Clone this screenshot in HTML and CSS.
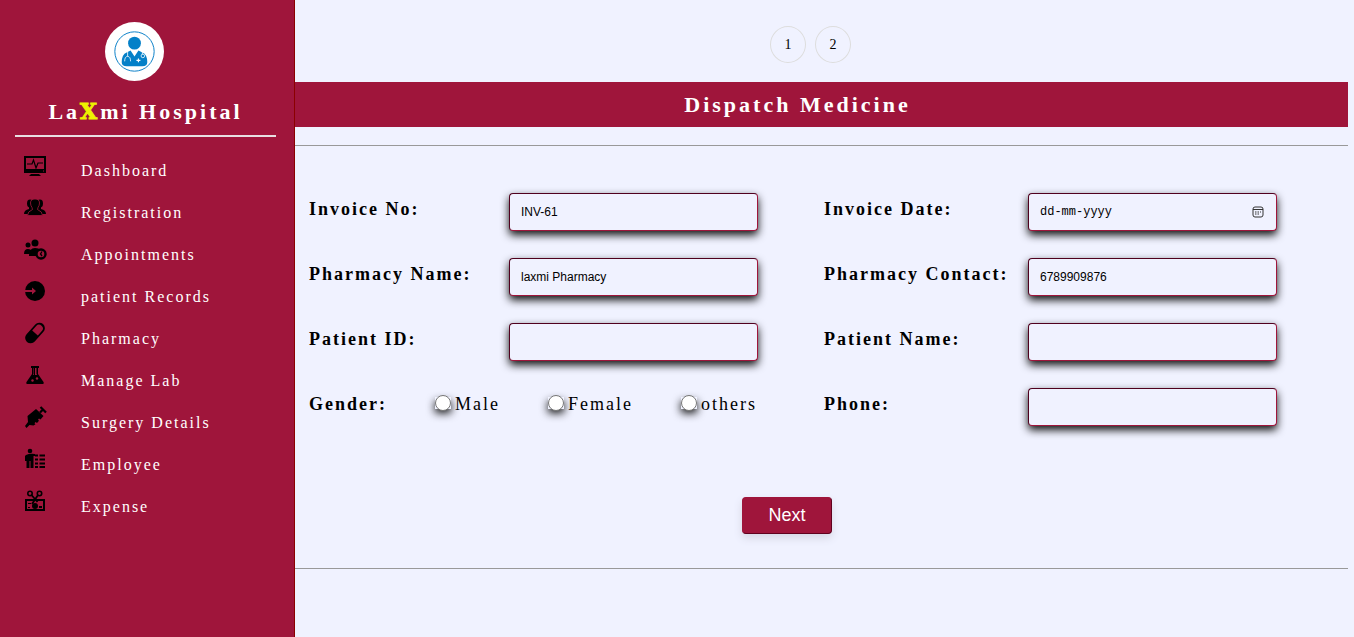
FILE: index.html
```
<!DOCTYPE html>
<html lang="en">
<head>
<meta charset="utf-8">
<title>Dispatch Medicine</title>
<link rel="stylesheet" href="styles.css">
</head>
<body>
<aside class="sidebar">
  <svg class="logo" viewBox="0 0 60 60" aria-hidden="true">
    <circle cx="30" cy="30" r="30" fill="#fff"/>
    <circle cx="30" cy="30" r="20" fill="none" stroke="#0a80c8"/>
    <circle cx="30" cy="21.500" r="6.500" fill="#0480c8"/>
    <path d="M17 41q0-8 5-10l4-2 4 6 4-6 4 2q5 2 5 10 0 4-5 4H22q-5 0-5-4z" fill="#0480c8"/>
    <path d="M23 30v5m-3 5q0-5 3-5t3 5M38 29v4" fill="none" stroke="#fff" stroke-width=".8"/>
    <circle cx="38.500" cy="34.500" r="1.800" fill="none" stroke="#fff" stroke-width=".8"/>
    <path d="M34 37v4m-2-2h4" stroke="#fff" stroke-width="1.200"/>
  </svg>
  <h1 class="brand">La<span class="brand-x">X</span>mi Hospital</h1>
  <nav>
    <ul class="menu">
      <li><a class="menu-link" href="#"><svg class="menu-icon" viewBox="0 0 24 24"><path fill-rule="evenodd" d="M1 3h22v17H1zM3 5v11h18V5z"/><path d="M4 11h5l1.500-4 2.500 8 2-5h5" fill="none" stroke="#000" stroke-width="1.200"/><path d="M8 21h8l2 2H6z"/><path d="M20 17.500h1v1h-1z" fill="#9f153b"/></svg>Dashboard</a></li>
      <li><a class="menu-link" href="#"><svg class="menu-icon" viewBox="0 0 24 24"><ellipse cx="7" cy="8.500" rx="3" ry="4"/><ellipse cx="17" cy="8.500" rx="3" ry="4"/><path d="M1 19q0-4 5-5v-4h12v4q5 1 5 5z"/><path d="M4.500 20.500q0-4 5-6l-.5-2q-1.500-2-1.500-4.500 0-4 4.500-4t4.500 4q0 2.500-1.500 4.500l-.5 2q5 2 5 6z" stroke="#9f153b" stroke-width=".8"/></svg>Registration</a></li>
      <li><a class="menu-link" href="#"><svg class="menu-icon" viewBox="0 0 24 24"><circle cx="5" cy="8" r="2.500"/><circle cx="12" cy="6" r="3.500"/><path d="M1 17q0-5 4-5 3 0 3 2-2 1-2 3zM6 19q0-8 6-8 4 0 5 2-4 2-4 6z"/><circle cx="18" cy="17" r="4.500" fill="none" stroke="#000" stroke-width="2.400"/><path d="M19 14.500L17.500 17l1.500 2" fill="none" stroke="#000" stroke-width="1.300"/></svg>Appointments</a></li>
      <li><a class="menu-link" href="#"><svg class="menu-icon" viewBox="0 0 24 24"><circle cx="12" cy="12" r="10"/><path d="M1 11h8V8.500l4 3.500-4 3.500V13H1z" fill="#9f153b"/></svg>patient Records</a></li>
      <li><a class="menu-link" href="#"><svg class="menu-icon" viewBox="0 0 24 24"><g transform="rotate(-48 12 12)"><rect y="6.500" width="24" height="11" rx="5.500"/><path d="M12 8.200h6a3.800 3.800 0 0 1 0 7.600h-6z" fill="#9f153b"/></g></svg>Pharmacy</a></li>
      <li><a class="menu-link" href="#"><svg class="menu-icon" viewBox="0 0 24 24"><path d="M8 3h8v2h-1v6l5.500 8q1 2-1.500 2H5q-2.500 0-1.500-2L9 11V5H8z"/><path d="M10.500 5h3v6l2 3H9l1.500-3z" fill="#9f153b"/><path d="M9 12h6l1 2H8zM11 5h1v8h-1z"/><circle cx="9.500" cy="17.500" r="1.200" fill="#9f153b"/><circle cx="14" cy="15.500" r="1.200" fill="#9f153b"/></svg>Manage Lab</a></li>
      <li><a class="menu-link" href="#"><svg class="menu-icon" viewBox="0 0 24 24"><path d="M2 21l3-4-.5-6L13 4l7.500 7-3 3.500-1.500-1-1 1.200 1 1-2 2.300-1.500-1-1 1.200 1 1-2 1.300-4-.5-3 3z"/><path d="M17 7.500l3.500-3.500m-3-2l5.500 5.500" fill="none" stroke="#000" stroke-width="2.200"/></svg>Surgery Details</a></li>
      <li><a class="menu-link" href="#"><svg class="menu-icon" viewBox="0 0 24 24"><circle cx="7" cy="4" r="2.300"/><path d="M3 8q4-2 9-1v2h-1.500v12h-3v-7h-1v7h-3v-7H2V9z"/><path d="M12 8.500h3m1.500 0H22M12 12.500h3m1.500 0H22M12 16.500h3m1.500 0H22M12 20h3m1.500 0H22" stroke="#000" stroke-width="2"/></svg>Employee</a></li>
      <li><a class="menu-link" href="#"><svg class="menu-icon" viewBox="0 0 24 24"><path fill-rule="evenodd" d="M2 10h20v12H2zM4 12v8h16v-8z"/><circle cx="12" cy="17" r="3"/><path d="M5 14h3v1H5zM16 17h3v2h-3zM5 18h2v1H5z"/><circle cx="7" cy="4.500" r="2.200" fill="none" stroke="#000" stroke-width="1.600"/><circle cx="16.500" cy="4.500" r="2.200" fill="none" stroke="#000" stroke-width="1.600"/><path d="M8.500 6l6 7M15 6l-6 9" stroke="#000" stroke-width="1.800"/></svg>Expense</a></li>
    </ul>
  </nav>
</aside>
<main class="main">
  <nav class="steps">
    <a class="step" href="#">1</a>
    <a class="step" href="#">2</a>
  </nav>
  <h2 class="banner">Dispatch Medicine</h2>
  <form class="form">
    <div class="fields">
      <label class="label" for="invoice">Invoice No:</label>
      <input class="input" id="invoice" type="text" value="INV-61">
      <label class="label" for="date">Invoice Date:</label>
      <div class="date">
        <input class="input input-date" id="date" type="text" placeholder="dd-mm-yyyy">
        <svg class="calendar" viewBox="0 0 12 12" aria-hidden="true"><rect x="1" y="1" width="10" height="10" rx="2" fill="none" stroke="#333"/><path d="M1 3.500h10" stroke="#333"/><path d="M3 6h1.500m1 0H7m1 0h1M3 8h1.500m1 0H7" stroke="#333"/></svg>
      </div>
      <label class="label" for="pharmacy">Pharmacy Name:</label>
      <input class="input" id="pharmacy" type="text" value="laxmi Pharmacy">
      <label class="label" for="contact">Pharmacy Contact:</label>
      <input class="input" id="contact" type="text" value="6789909876">
      <label class="label" for="pid">Patient ID:</label>
      <input class="input" id="pid" type="text">
      <label class="label" for="pname">Patient Name:</label>
      <input class="input" id="pname" type="text">
      <div class="gender" role="radiogroup" aria-labelledby="gender">
        <span class="label gender-label" id="gender">Gender:</span>
        <label class="option"><input class="radio" type="radio" name="gender">Male</label>
        <label class="option"><input class="radio" type="radio" name="gender">Female</label>
        <label class="option"><input class="radio" type="radio" name="gender">others</label>
      </div>
      <label class="label" for="phone">Phone:</label>
      <input class="input" id="phone" type="tel">
    </div>
    <button class="next" type="button">Next</button>
  </form>
</main>
</body>
</html>
```
FILE: styles.css
```
* { box-sizing: border-box; }
body {
  margin: 0;
  min-height: 100vh;
  display: flex;
  background: #f0f2ff;
  color: #000;
  font-family: "Liberation Serif", "Times New Roman", serif;
}
.sidebar {
  flex: 0 0 295px;
  padding: 22px 18px 0 15px;
  background: #9f153b;
  border-right: 1px solid #8b0000;
}
.logo { display: block; width: 59px; margin-left: 90px; }
.brand {
  margin: 0;
  padding: 16px 0 9px;
  border-bottom: 2px solid #e8dfe2;
  color: #fff;
  font-size: 22px;
  line-height: 29px;
  letter-spacing: 3px;
  text-align: center;
}
.brand-x {
  color: #eef200;
  font-family: "DejaVu Serif", serif;
  -webkit-text-stroke: 1px #eef200;
}
.menu { list-style: none; margin: 0; padding: 13px 0 0 8px; }
.menu-link {
  display: flex;
  align-items: center;
  gap: 34px;
  height: 42px;
  color: #fff;
  font-size: 16px;
  letter-spacing: 2px;
  text-decoration: none;
}
.menu-icon { width: 24px; height: 36px; padding-bottom: 12px; }
.main { flex: 1; padding-right: 6px; }
.steps {
  display: flex;
  justify-content: center;
  gap: 9px;
  padding: 26px 22px 19px 0;
}
.step {
  width: 36px;
  height: 37px;
  border: 1px solid #ddd;
  border-radius: 50%;
  color: #000;
  font-size: 14px;
  line-height: 35px;
  text-align: center;
  text-decoration: none;
}
.banner {
  margin: 0 0 18px;
  padding-right: 48px;
  background: #9f153b;
  color: #fff;
  font-size: 22px;
  line-height: 45px;
  letter-spacing: 3px;
  text-align: center;
}
.form {
  padding: 33px 0 34px;
  border-top: 1px solid #999;
  border-bottom: 1px solid #999;
}
.fields {
  display: grid;
  grid-template-columns: 200fr 315fr 204fr 320fr;
  grid-auto-rows: 65px;
  align-items: center;
  padding-left: 14px;
}
.label {
  padding-bottom: 4px;
  font-size: 18px;
  font-weight: bold;
  letter-spacing: 2px;
  white-space: nowrap;
}
.input {
  width: 249px;
  height: 38px;
  padding: 0 11px;
  border: 1px solid;
  border-color: #50001e #9f153b #9f153b #50001e;
  border-radius: 4px;
  background: #f0f2ff;
  box-shadow: 0 4px 8px #111;
  color: #000;
  font: 12px "Liberation Sans", Arial, sans-serif;
}
.date { position: relative; width: 249px; }
.input-date { display: block; font-family: "Liberation Mono", monospace; }
.input-date::placeholder { color: #000; opacity: 1; }
.calendar { position: absolute; right: 13px; top: 13px; width: 12px; height: 12px; }
.gender { grid-column: span 2; display: flex; align-items: center; }
.gender-label { width: 126px; }
.option {
  display: flex;
  align-items: center;
  margin-right: 48px;
  padding-bottom: 4px;
  font-size: 18px;
  letter-spacing: 2px;
}
.radio {
  appearance: none;
  display: grid;
  place-content: center;
  width: 16px;
  height: 12px;
  margin: 0 4px 4px 0;
  background: #f0f2ff;
  box-shadow: 0 4px 8px #111;
}
.radio::before {
  content: "";
  width: 14px;
  height: 14px;
  border: 1px solid #767676;
  border-radius: 50%;
  background: #fff;
}
.radio:checked::before { background: radial-gradient(#9f153b 40%, #fff 45%); }
.next {
  display: block;
  width: 90px;
  height: 37px;
  margin: 58px auto 0 447px;
  border: 1px solid;
  border-color: #9f153b #60001e #60001e #9f153b;
  border-radius: 4px;
  background: #9f153b;
  box-shadow: 0 4px 8px #d5d6e3;
  color: #fff;
  font: 18px "Liberation Sans", Arial, sans-serif;
}
```
